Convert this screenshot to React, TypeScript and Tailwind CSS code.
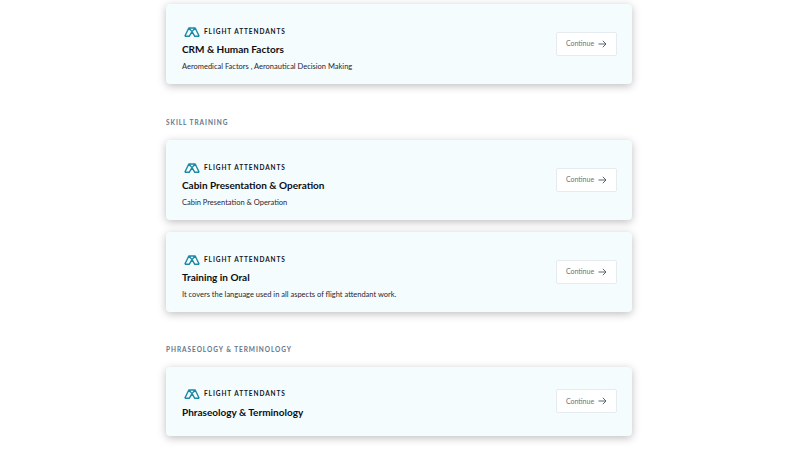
function Logo() {
  return (
    <svg width="16" height="10" viewBox="0 0 16 10" fill="none" className="ml-[2px] shrink-0">
      <path d="M0.8 9.3 L4.8 1 H11.2 L15.2 9.3 M0.8 9.3 H5.2 L8 4.6 L10.8 9.3 H15.2 M4.8 1 L8 4.6 L11.2 1" stroke="#1d87a6" strokeWidth="1.4" strokeLinejoin="round" />
    </svg>
  );
}

function Card({ title, desc, h }: { title: string; desc?: string; h: string }) {
  return (
    <div className={`flex items-center justify-between rounded-[4px] bg-[#f5fcfe] pl-4 pr-[15px] shadow-[0_2px_8px_rgba(0,0,0,0.26)] ${h}`}>
      <div className={`flex flex-col ${desc ? "mt-[11px]" : "mt-[4px]"}`}>
        <div className="flex items-center gap-[4px] h-[12px]">
          <Logo />
          <span className="text-[6.5px] font-bold tracking-[0.92px] text-[#10161e] leading-[12px]">FLIGHT ATTENDANTS</span>
        </div>
        <div className={`${desc ? "mt-[3px]" : "mt-[4px]"} text-[10px] font-bold leading-[16px] text-[#0a0e14]`}>{title}</div>
        {desc && <div className="mt-[3px] text-[7.5px] leading-[13px] text-[#1f2733]">{desc}</div>}
      </div>
      <div className="-mt-[1px] flex h-[24px] w-[61px] items-center justify-center gap-[4px] rounded-[2px] border border-[#e6ebef] bg-white text-[7px] text-[#6b7280]">
        <span>Continue</span>
        <svg width="9" height="8" viewBox="0 0 9 8" fill="none">
          <path d="M0.5 4 H8 M4.8 0.8 L8 4 L4.8 7.2" stroke="#4b5563" strokeWidth="0.9" />
        </svg>
      </div>
    </div>
  );
}

function Label({ children, className }: { children: string; className: string }) {
  return (
    <div className={`text-[6.5px] font-bold tracking-[0.95px] leading-[10px] text-[#66758a] ${className}`}>{children}</div>
  );
}

export default function App() {
  return (
    <div className="h-[455px] w-[800px] overflow-hidden bg-white font-['Lato','Open_Sans',sans-serif]">
      <div className="ml-[166px] w-[466px] pt-[4px]">
        <Card h="h-[80px]" title="CRM & Human Factors" desc="Aeromedical Factors , Aeronautical Decision Making" />
        <Label className="mt-[34px] mb-[12px]">SKILL TRAINING</Label>
        <div className="flex flex-col gap-[12px]">
          <Card h="h-[80px]" title="Cabin Presentation & Operation" desc="Cabin Presentation & Operation" />
          <Card h="h-[80px]" title="Training in Oral" desc="It covers the language used in all aspects of flight attendant work." />
        </div>
        <Label className="mt-[33px] mb-[12px]">PHRASEOLOGY & TERMINOLOGY</Label>
        <Card h="h-[69px]" title="Phraseology & Terminology" />
      </div>
    </div>
  );
}
